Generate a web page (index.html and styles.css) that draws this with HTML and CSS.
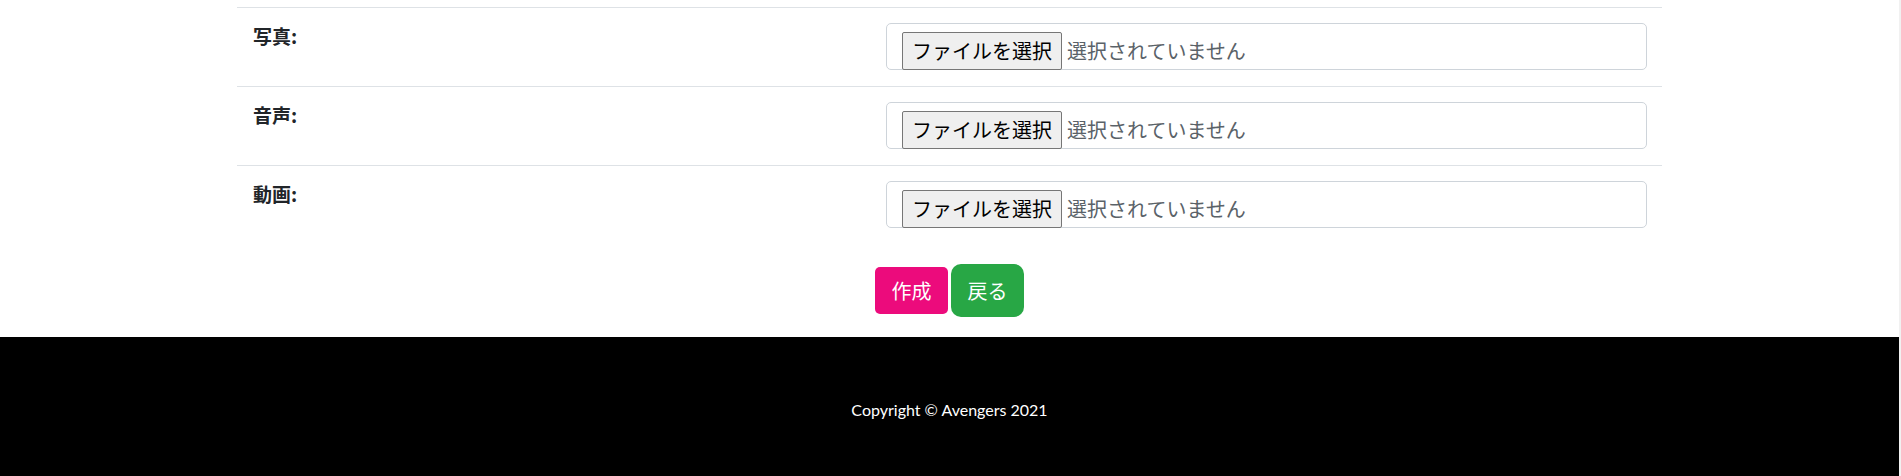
FILE: index.html
```html
<!DOCTYPE html>
<html lang="ja">
<head>
<meta charset="utf-8">
<title>作成</title>
<link rel="stylesheet" href="styles.css">
</head>
<body>
<div class="page">
  <main class="container">
    <div class="form-table">
      <div class="row">
        <div class="cell label-cell"><label class="label">写真:</label></div>
        <div class="cell input-cell">
          <div class="file-control">
            <span class="file-btn">ファイルを選択</span>
            <span class="file-name">選択されていません</span>
          </div>
        </div>
      </div>
      <div class="row">
        <div class="cell label-cell"><label class="label">音声:</label></div>
        <div class="cell input-cell">
          <div class="file-control">
            <span class="file-btn">ファイルを選択</span>
            <span class="file-name">選択されていません</span>
          </div>
        </div>
      </div>
      <div class="row">
        <div class="cell label-cell"><label class="label">動画:</label></div>
        <div class="cell input-cell">
          <div class="file-control">
            <span class="file-btn">ファイルを選択</span>
            <span class="file-name">選択されていません</span>
          </div>
        </div>
      </div>
    </div>
    <div class="actions">
      <button class="btn btn-create" type="button">作成</button>
      <button class="btn btn-back" type="button">戻る</button>
    </div>
  </main>
  <footer class="footer">
    <p class="copyright">Copyright © Avengers 2021</p>
  </footer>
</div>
</body>
</html>
```
FILE: styles.css
```css
html {
  background: #f1f1f1;
  margin: 0;
  padding: 0;
}
body {
  margin: 0;
  padding: 0;
  width: 1899px;
  height: 476px;
  overflow: hidden;
  background: #ffffff;
  font-family: "Noto Sans CJK JP", "Noto Sans", sans-serif;
  color: #212529;
}
.page {
  display: flex;
  flex-direction: column;
  min-height: 476px;
}
.container {
  width: 1425px;
  margin: 0 auto;
  padding-top: 7px;
}
.row {
  display: grid;
  grid-template-columns: 633px 1fr;
  border-top: 1px solid #dee2e6;
}
.label-cell {
  padding: 15px 16px 16px 16px;
}
.label {
  display: block;
  font-size: 19px;
  font-weight: 700;
  line-height: 23px;
  margin-top: 1px;
  color: #212529;
}
.input-cell {
  padding: 15px 15px 16px 16px;
}
.file-control {
  box-sizing: border-box;
  height: 47px;
  border: 1px solid #ced4da;
  border-radius: 5px;
  padding: 8px 15px;
  display: flex;
  align-items: flex-start;
  background: #fff;
}
.file-btn {
  box-sizing: border-box;
  height: 38px;
  padding: 0 9px;
  border: 1px solid #767676;
  border-radius: 2px;
  background: #efefef;
  color: #000;
  font-size: 20px;
  line-height: 36px;
  white-space: nowrap;
}
.file-name {
  margin-left: 5px;
  font-size: 20px;
  line-height: 38px;
  color: #5a6268;
  white-space: nowrap;
}
.actions {
  display: flex;
  justify-content: center;
  align-items: center;
  gap: 3px;
  padding: 20px 0 20px;
}
.btn {
  box-sizing: border-box;
  width: 73px;
  border: none;
  color: #ffffff;
  font-family: "Noto Sans CJK JP", "Noto Sans", sans-serif;
  font-size: 20px;
  line-height: 30px;
  padding: 0;
  cursor: pointer;
}
.btn-create {
  height: 47px;
  background: #ec0b7c;
  border-radius: 5px;
}
.btn-back {
  height: 53px;
  background: #28a745;
  border-radius: 10px;
}
.footer {
  flex: 1;
  background: #000000;
  padding: 61px 0 0;
}
.copyright {
  margin: 0;
  text-align: center;
  color: #ffffff;
  font-family: Lato, "Open Sans", sans-serif;
  font-size: 16px;
  line-height: 24px;
}
```
